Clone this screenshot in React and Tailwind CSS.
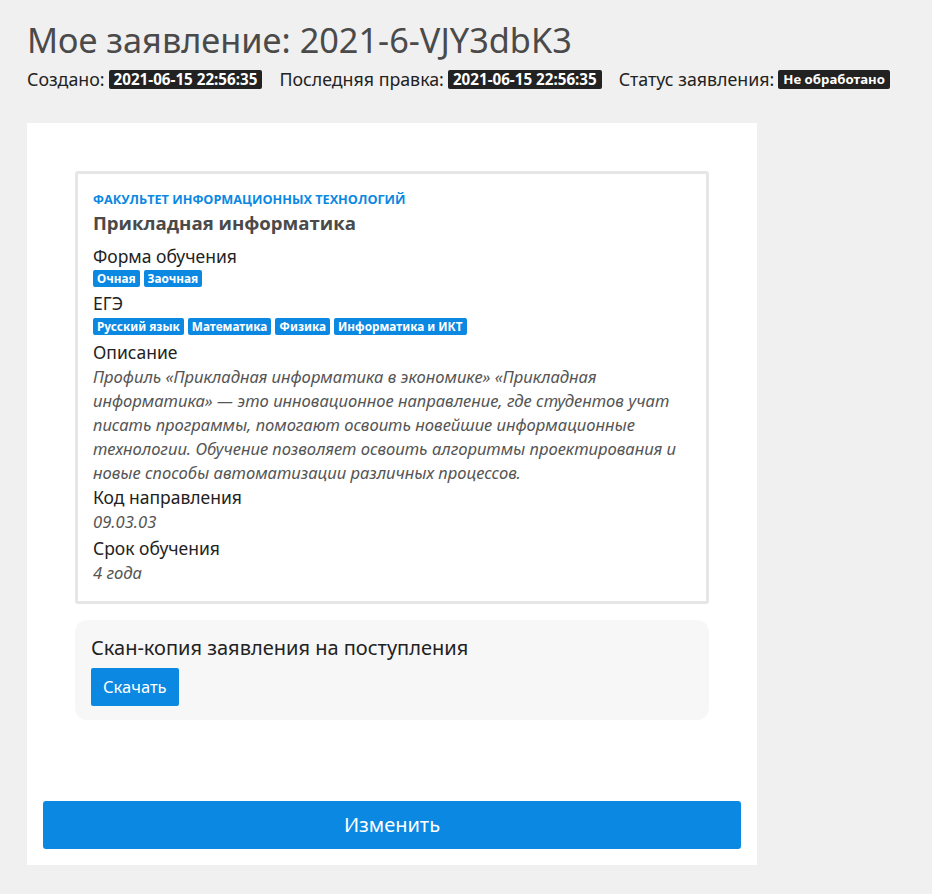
export default function App() {
  const badge = "inline-block rounded-[2px] bg-[#0a88e2] px-[4px] text-[11.8px] font-bold leading-[17px] text-white";
  const dark = "inline-block rounded-[2px] bg-[#222222] px-[5px] font-bold leading-[19px] text-white";
  return (
    <div className="min-h-[894px] bg-[#f0f0f0] font-['Noto_Sans',sans-serif] text-[#222]">
      <div className="px-[27px] pt-[16px]">
        <h1 className="text-[34.3px] leading-[48px] text-[#4a4a4a]">Мое заявление: 2021-6-VJY3dbK3</h1>
        <div className="mt-[4px] flex items-center text-[17.8px] leading-[22px]">
          <span>Создано:</span>
          <span className={dark + " ml-[4px] text-[15.2px]"}>2021-06-15 22:56:35</span>
          <span className="ml-[17px]">Последняя правка:</span>
          <span className={dark + " ml-[4px] text-[15.2px]"}>2021-06-15 22:56:35</span>
          <span className="ml-[17px]">Статус заявления:</span>
          <span className={dark + " ml-[4px] text-[13.2px]"}>Не обработано</span>
        </div>
      </div>
      <div className="mx-[27px] mt-[33px] w-[730px]">
        <div className="bg-white px-[48px] pt-[48px] pb-[65px]">
          <div className="rounded-[3px] border-[3px] border-[#e6e6e6] px-[15px] pt-[16px] pb-[16px]">
            <div className="font-['Open_Sans',sans-serif] text-[12.7px] font-bold uppercase leading-[18px] text-[#0a88e2]">Факультет информационных технологий</div>
            <div className="font-['Open_Sans',sans-serif] text-[18.6px] font-bold leading-[30px] text-[#4a4a4a]">Прикладная информатика</div>
            <div className="mt-[6px] text-[17.5px] leading-[24px]">Форма обучения</div>
            <div className="mt-[2px] flex gap-[4px]">
              <span className={badge}>Очная</span>
              <span className={badge}>Заочная</span>
            </div>
            <div className="mt-[4px] text-[17.5px] leading-[24px]">ЕГЭ</div>
            <div className="mt-[3px] flex gap-[4px]">
              <span className={badge}>Русский язык</span>
              <span className={badge}>Математика</span>
              <span className={badge}>Физика</span>
              <span className={badge}>Информатика и ИКТ</span>
            </div>
            <div className="mt-[5px] text-[17.5px] leading-[24px]">Описание</div>
            <p className="mt-[1px] text-[16.6px] italic leading-[24px] text-[#555]">
              Профиль «Прикладная информатика в экономике» «Прикладная информатика» — это инновационное направление, где студентов учат писать программы, помогают освоить новейшие информационные технологии. Обучение позволяет освоить алгоритмы проектирования и новые способы автоматизации различных процессов.
            </p>
            <div className="text-[17.5px] leading-[24px]">Код направления</div>
            <div className="text-[16.6px] italic leading-[26px] text-[#555]">09.03.03</div>
            <div className="text-[17.5px] leading-[26px]">Срок обучения</div>
            <div className="text-[16.6px] italic leading-[24px] text-[#555]">4 года</div>
          </div>
          <div className="mt-[16px] rounded-[12px] bg-[#f7f7f7] px-[16px] pt-[15px] pb-[14px]">
            <div className="text-[20px] leading-[26px]">Скан-копия заявления на поступления</div>
            <button className="mt-[7px] block rounded-[2px] bg-[#0a88e2] px-[12px] text-[16.5px] leading-[38px] text-white">Скачать</button>
          </div>
        </div>
        <div className="bg-white px-[16px] pt-[16px] pb-[16px]">
          <button className="block h-[48px] w-full rounded-[3px] bg-[#0a88e2] text-[20px] text-white">Изменить</button>
        </div>
      </div>
    </div>
  );
}
